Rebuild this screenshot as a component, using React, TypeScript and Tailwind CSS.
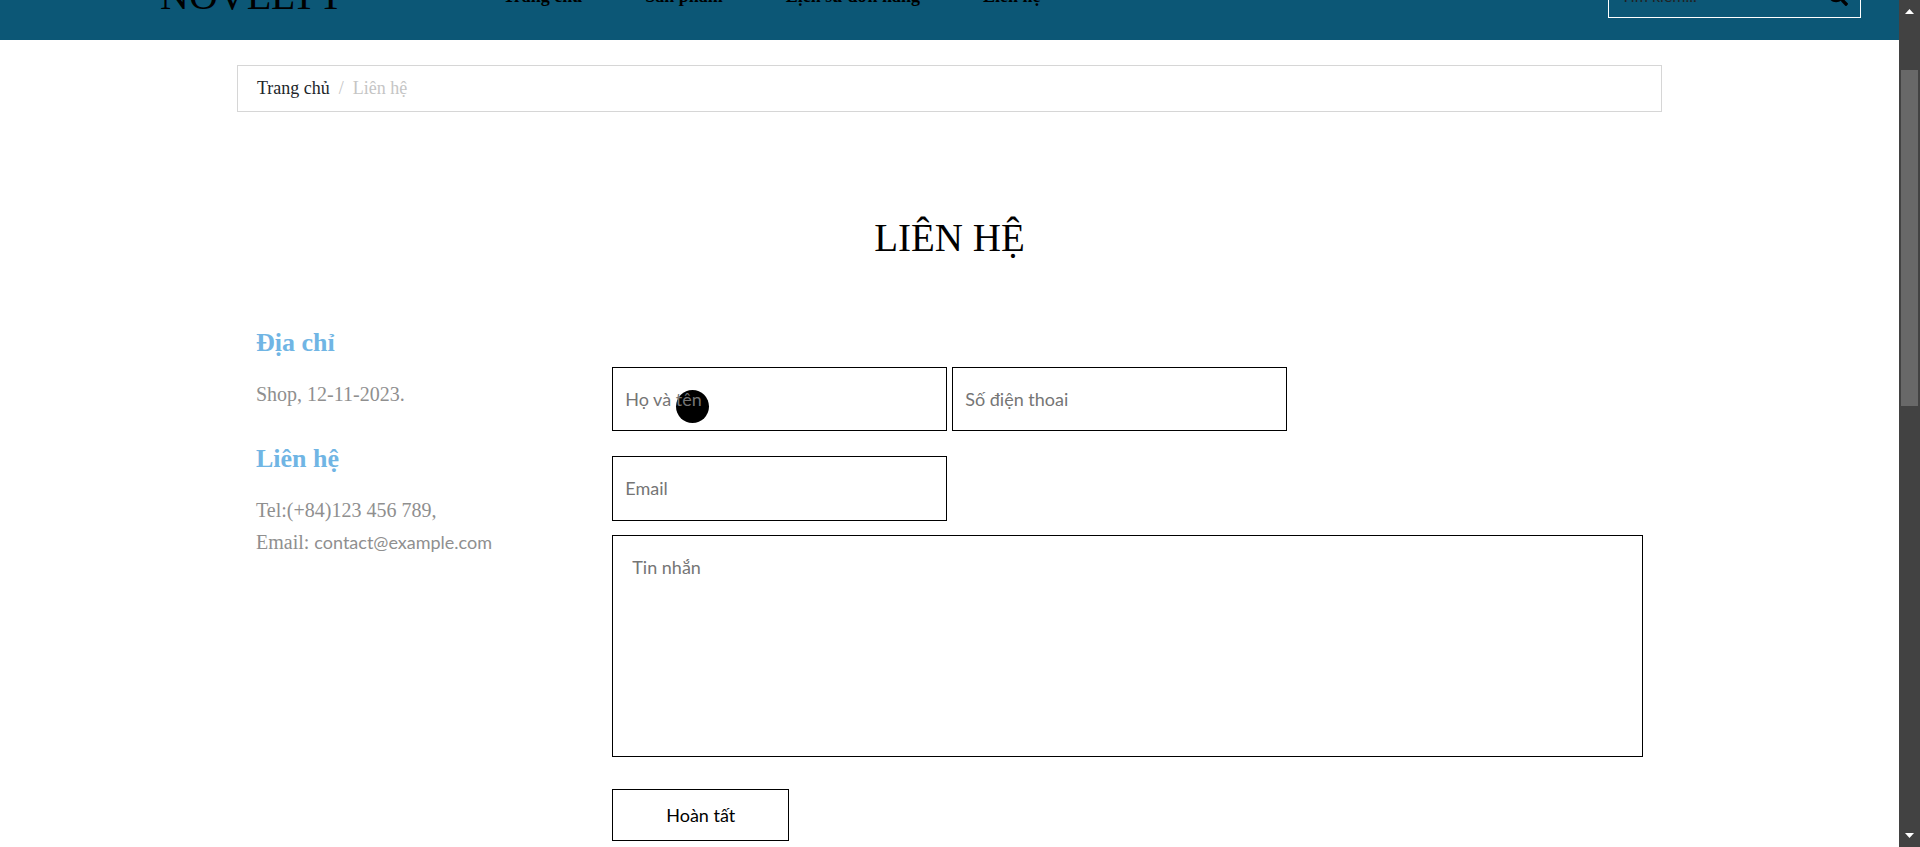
import { FaSearch } from "react-icons/fa";

const navItems = ["Trang chủ", "Sản phẩm", "Lịch sử đơn hàng", "Liên hệ"];

const fieldClass =
  "w-[335px] border border-black bg-transparent px-3 pb-px font-['Lato','Liberation_Sans',sans-serif] text-lg placeholder:text-[#757575] placeholder:opacity-100";

function Header() {
  return (
    <header className="flex h-10 flex-col justify-end overflow-hidden bg-[#0c5776] pb-[22px]">
      <div className="flex h-11 shrink-0 items-center pl-40 pr-[38px] text-black">
        <a href="#" className="w-[343px] text-[40px] leading-[44px]">
          NOVELTY
        </a>
        <nav className="flex flex-1 gap-[63px] text-lg font-bold leading-[44px]">
          {navItems.map((item) => (
            <a key={item} href="#">
              {item}
            </a>
          ))}
        </nav>
        <form className="flex h-11 w-[253px] items-center border border-white pl-3 pr-3">
          <input
            type="search"
            aria-label="Tìm kiếm"
            placeholder="Tìm kiếm..."
            className="min-w-0 flex-1 bg-transparent font-['Lato','Liberation_Sans',sans-serif] text-base placeholder:text-[#222222] placeholder:opacity-100"
          />
          <button type="button" aria-label="Tìm">
            <FaSearch className="size-5" />
          </button>
        </form>
      </div>
    </header>
  );
}

function Breadcrumb() {
  return (
    <nav
      aria-label="Breadcrumb"
      className="mt-[25px] flex h-[47px] items-center border border-[#d6d6d6] px-[19px] pb-px text-lg leading-6 text-[#c5c5c5]"
    >
      <a href="#" className="text-[#212529]">
        Trang chủ
      </a>
      <span className="px-[9px]">/</span>
      <span>Liên hệ</span>
    </nav>
  );
}

function ContactInfo() {
  return (
    <section className="w-1/4 px-[19px] text-xl leading-8 text-[#8f8f8f]">
      <h2 className="text-[26px] font-bold text-[#70b5e4]">Địa chỉ</h2>
      <p className="mt-[19px]">Shop, 12-11-2023.</p>
      <h2 className="mt-[33px] text-[26px] font-bold text-[#70b5e4]">Liên hệ</h2>
      <p className="mt-[19px]">
        Tel:(+84)123 456 789,
        <br />
        Email:{" "}
        <a
          href="mailto:contact@example.com"
          className="font-['Lato','Liberation_Sans',sans-serif] text-lg leading-8"
        >
          contact@example.com
        </a>
      </p>
    </section>
  );
}

function ContactForm() {
  return (
    <form className="flex w-3/4 flex-col items-start px-[19px] pt-10">
      <div className="flex gap-[5px]">
        <div className="relative">
          <span className="absolute left-16 top-[23px] size-[33px] rounded-full bg-black" />
          <input type="text" aria-label="Họ và tên" placeholder="Họ và tên" className={`relative h-16 ${fieldClass}`} />
        </div>
        <input type="tel" aria-label="Số điện thoai" placeholder="Số điện thoai" className={`h-16 ${fieldClass}`} />
      </div>
      <input type="email" aria-label="Email" placeholder="Email" className={`mt-[25px] h-[65px] ${fieldClass}`} />
      <textarea
        aria-label="Tin nhắn"
        placeholder="Tin nhắn"
        className="mt-[14px] h-[222px] w-full resize-none border border-black px-[19px] py-[17px] font-['Lato','Liberation_Sans',sans-serif] text-lg placeholder:text-[#757575] placeholder:opacity-100"
      />
      <button
        type="button"
        className="mt-8 h-[52px] w-[177px] border border-black pb-px font-['Lato','Liberation_Sans',sans-serif] text-lg text-black"
      >
        Hoàn tất
      </button>
    </form>
  );
}

function ScrollRail() {
  return (
    <div aria-hidden="true" className="flex w-[21px] shrink-0 flex-col items-center bg-[#424242]">
      <svg viewBox="0 0 9 5" className="mt-[9px] h-[5px] w-[9px]" fill="white">
        <path d="M4.5 0 9 5H0Z" />
      </svg>
      <div className="mt-14 h-[336px] w-[17px] bg-[#686868]" />
      <svg viewBox="0 0 9 5" className="mb-[9px] mt-auto h-[5px] w-[9px]" fill="white">
        <path d="M0 0H9L4.5 5Z" />
      </svg>
    </div>
  );
}

export default function App() {
  return (
    <div className="flex min-h-screen bg-white font-['Liberation_Serif','Times_New_Roman',serif]">
      <div className="min-w-0 flex-1">
        <Header />
        <main className="mx-auto max-w-[1425px]">
          <Breadcrumb />
          <h1 className="mt-[102px] text-center text-[39px] leading-[48px] text-black">LIÊN HỆ</h1>
          <div className="mt-[65px] flex">
            <ContactInfo />
            <ContactForm />
          </div>
        </main>
      </div>
      <ScrollRail />
    </div>
  );
}
